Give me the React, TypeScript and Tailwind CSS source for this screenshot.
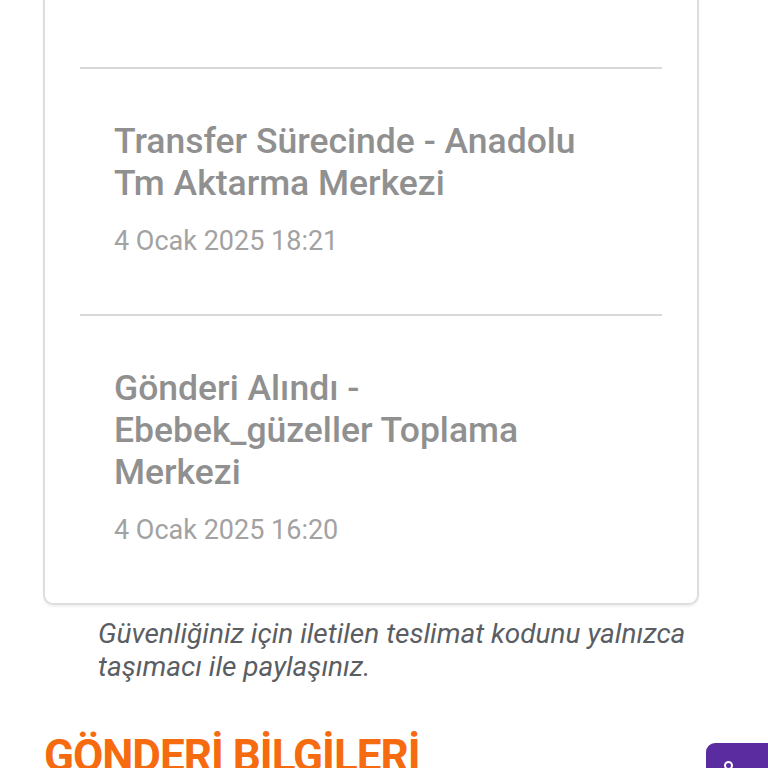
import React from "react";

const entries = [
  { title: ["Transfer Sürecinde - Anadolu", "Tm Aktarma Merkezi"], date: "4 Ocak 2025 18:21" },
  { title: ["Gönderi Alındı -", "Ebebek_güzeller Toplama", "Merkezi"], date: "4 Ocak 2025 16:20" },
];

export default function App() {
  return (
    <div className="w-[768px] h-[768px] overflow-hidden bg-white" style={{ fontFamily: "Roboto, 'Noto Sans', sans-serif" }}>
      <div className="ml-[43px] w-[656px] -mt-[20px] rounded-[10px] border-2 border-[#dedede] shadow-[0_2px_2px_rgba(0,0,0,0.06)]">
        <div className="h-[85px]" />
        {entries.map((e, i) => (
          <div key={i} className="mx-[35px] border-t-2 border-[#d9d9d9] pl-[34px] pt-[51px] pb-[58px]">
            <div className="text-[35.5px] leading-[42px] font-medium text-[#909090]">
              {e.title.map((t, j) => (
                <div key={j}>{t}</div>
              ))}
            </div>
            <div className="mt-[22px] text-[27px] leading-[30px] text-[#a2a2a2]">{e.date}</div>
          </div>
        ))}
      </div>
      <div className="ml-[98px] mt-[12px] text-[28px] leading-[33px] italic text-[#5a5e63]">
        <div>Güvenliğiniz için iletilen teslimat kodunu yalnızca</div>
        <div>taşımacı ile paylaşınız.</div>
      </div>
      <div className="flex items-start justify-between mt-[47px]">
        <div className="ml-[44px] text-[44px] leading-[52px] font-bold text-[#f66a10] tracking-[-1px]">GÖNDERİ BİLGİLERİ</div>
        <div className="mt-[13px] w-[62px] h-[40px] rounded-tl-[9px] bg-[#5b2ba0] pt-[18px] pl-[18px]">
          <div className="w-[9px] h-[9px] rounded-full border-2 border-white" />
        </div>
      </div>
    </div>
  );
}
